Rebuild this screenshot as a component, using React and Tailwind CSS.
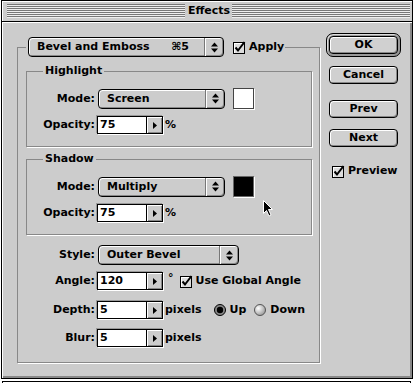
import React from 'react';

function UpDown() {
    return (
        <svg width="7" height="11" viewBox="0 0 7 11">
            <path d="M0 4.5L3.5 0.5L7 4.5Z" fill="#000" />
            <path d="M0 6.5L3.5 10.5L7 6.5Z" fill="#000" />
        </svg>
    );
}

function Popup({ label, hotkey, className }) {
    return (
        <div className={`flex h-[20px] shrink-0 rounded-[4px] border border-black bg-[#cccccc] shadow-[inset_1px_1px_0_#fff,inset_-1px_-1px_0_#888] ${className}`}>
            <div className="flex flex-1 items-center pl-[8px] pr-[15px]">
                <span>{label}</span>
                {hotkey && <span className="ml-auto">{hotkey}</span>}
            </div>
            <div className="flex w-[19px] items-center justify-center border-l border-[#777] shadow-[inset_1px_0_0_#fff]">
                <UpDown />
            </div>
        </div>
    );
}

function Field({ value, className }) {
    return (
        <div className={`flex h-[18px] w-[66px] shrink-0 border border-black bg-white shadow-[1px_1px_0_#fff,-1px_-1px_0_#999] ${className}`}>
            <div className="flex-1 pl-[2px] leading-[16px]">{value}</div>
            <div className="flex w-[16px] items-center justify-center border-l border-black bg-[#cccccc] shadow-[inset_1px_1px_0_#fff,inset_-1px_-1px_0_#888]">
                <svg width="4" height="7" viewBox="0 0 4 7">
                    <path d="M0 0L4 3.5L0 7Z" fill="#000" />
                </svg>
            </div>
        </div>
    );
}

function Check({ className }) {
    return (
        <svg className={`shrink-0 ${className}`} width="13" height="13" viewBox="0 0 13 13">
            <rect x="0.5" y="1.5" width="11" height="11" fill="#dddddd" stroke="#000" />
            <path d="M1 2.5H11M1.5 2.5V12" stroke="#fff" />
            <path d="M2.5 6.5L5 9.5L11.5 1" stroke="#000" strokeWidth="2" fill="none" />
        </svg>
    );
}

function Radio({ on, className }) {
    return (
        <svg className={`shrink-0 ${className}`} width="12" height="12" viewBox="0 0 12 12">
            <defs>
                <radialGradient id={on ? 'rOn' : 'rOff'} cx="0.35" cy="0.35" r="0.7">
                    <stop offset="0" stopColor="#ffffff" />
                    <stop offset="1" stopColor={on ? '#777777' : '#999999'} />
                </radialGradient>
            </defs>
            <circle cx="6" cy="6" r="5.5" fill={on ? '#888' : `url(#rOff)`} stroke={on ? '#000' : '#555'} />
            {on && <circle cx="6" cy="6" r="3.2" fill="#000" />}
        </svg>
    );
}

function Button({ children, className }) {
    return (
        <div className={`flex h-[18px] w-[69px] shrink-0 items-center justify-center rounded-[4px] border border-black bg-[#d0d0d0] shadow-[inset_1px_1px_0_#fff,inset_-1px_-1px_0_#888] ${className}`}>
            {children}
        </div>
    );
}

export default function App() {
    return (
        <div className="h-[383px] w-[415px] overflow-hidden bg-white font-['DejaVu_Sans',sans-serif] text-[11px] font-bold leading-[14px] text-black">
            <div className="relative ml-[1px] flex h-[379px] w-[412px] flex-col border border-black">
                {/* title bar */}
                <div className="flex h-[21px] shrink-0 border-b border-black bg-[#cccccc] pl-[5px] pr-[2px] pt-[3px] shadow-[inset_1px_1px_0_#fff]">
                    <div className="flex h-[14px] flex-1 items-center justify-center bg-[repeating-linear-gradient(to_bottom,#777_0px,#777_1px,#eeeeee_1px,#eeeeee_2px)]">
                        <span className="bg-[#cccccc] pl-[3px] pr-[2px] leading-[14px]">Effects</span>
                    </div>
                </div>

                <div className="flex flex-1 border-l border-t border-white bg-[#cccccc] shadow-[inset_-2px_-2px_0_#888]">
                    <fieldset className="ml-[14px] mt-[14px] h-[326px] w-[303px] shrink-0 border border-[#888888] pl-[8px] pr-[7px] shadow-[1px_1px_0_#fff]">
                        <legend className="flex items-center pl-[2px] pr-[1px]">
                            <Popup className="w-[196px]" label="Bevel and Emboss" hotkey="⌘5" />
                            <Check className="ml-[9px]" />
                            <span className="ml-[3px]">Apply</span>
                        </legend>

                        <fieldset className="mt-[7px] h-[83px] w-[286px] border border-[#888888] pl-[16px] shadow-[1px_1px_0_#fff]">
                            <legend className="px-[2px]">Highlight</legend>
                            <div className="mt-[10px] flex h-[21px] items-center">
                                <div className="w-[52px] text-right">Mode:</div>
                                <Popup className="ml-[3px] w-[127px]" label="Screen" />
                                <div className="ml-[8px] h-[21px] w-[21px] border border-[#444] bg-white shadow-[1px_1px_0_#fff]" />
                            </div>
                            <div className="mt-[7px] flex h-[18px] items-center">
                                <div className="w-[52px] text-right">Opacity:</div>
                                <Field className="ml-[2px]" value="75" />
                                <span className="ml-[2px]">%</span>
                            </div>
                        </fieldset>

                        <fieldset className="mt-[5px] h-[83px] w-[286px] border border-[#888888] pl-[16px] shadow-[1px_1px_0_#fff]">
                            <legend className="px-[2px]">Shadow</legend>
                            <div className="mt-[10px] flex h-[21px] items-center">
                                <div className="w-[52px] text-right">Mode:</div>
                                <Popup className="ml-[3px] w-[127px]" label="Multiply" />
                                <div className="ml-[8px] h-[21px] w-[21px] border border-[#666] bg-black shadow-[1px_1px_0_#fff]" />
                            </div>
                            <div className="mt-[7px] flex h-[18px] items-center">
                                <div className="w-[52px] text-right">Opacity:</div>
                                <Field className="ml-[2px]" value="75" />
                                <span className="ml-[2px]">%</span>
                            </div>
                        </fieldset>

                        <div className="mt-[10px] flex h-[20px] items-center">
                            <div className="w-[69px] text-right">Style:</div>
                            <Popup className="ml-[3px] w-[141px]" label="Outer Bevel" />
                        </div>
                        <div className="mt-[6px] flex h-[20px] items-center">
                            <div className="w-[69px] text-right">Angle:</div>
                            <Field className="ml-[2px]" value="120" />
                            <span className="ml-[5px] self-start">°</span>
                            <Check className="ml-[6px]" />
                            <span className="ml-[3px]">Use Global Angle</span>
                        </div>
                        <div className="mt-[9px] flex h-[20px] items-center">
                            <div className="w-[69px] text-right">Depth:</div>
                            <Field className="ml-[2px]" value="5" />
                            <span className="ml-[2px]">pixels</span>
                            <Radio on className="ml-[12px]" />
                            <span className="ml-[4px]">Up</span>
                            <Radio className="ml-[8px]" />
                            <span className="ml-[4px]">Down</span>
                        </div>
                        <div className="mt-[8px] flex h-[20px] items-center">
                            <div className="w-[69px] text-right">Blur:</div>
                            <Field className="ml-[2px]" value="5" />
                            <span className="ml-[2px]">pixels</span>
                        </div>
                    </fieldset>

                    <div className="flex flex-col items-start">
                        <div className="ml-[6px] mt-[10px] rounded-[7px] border border-black bg-[#999999] p-[2px] shadow-[inset_1px_1px_0_#ddd]">
                            <Button>OK</Button>
                        </div>
                        <Button className="ml-[9px] mt-[9px]">Cancel</Button>
                        <Button className="ml-[9px] mt-[16px]">Prev</Button>
                        <Button className="ml-[9px] mt-[11px]">Next</Button>
                        <div className="ml-[12px] mt-[17px] flex h-[14px] items-center">
                            <Check />
                            <span className="ml-[3px]">Preview</span>
                        </div>
                    </div>
                </div>

                {/* mouse pointer */}
                <svg className="absolute left-[261px] top-[199px]" width="11" height="17" viewBox="0 0 11 17">
                    <path d="M0.5 0.5V13.5L3.5 10.5L6 16L8 15L5.5 9.5H9.5Z" fill="#000" stroke="#fff" strokeWidth="1" />
                </svg>
            </div>
            <div className="ml-[2px] mt-[2px] h-[2px] w-[409px] border-l border-r border-t border-black" />
        </div>
    );
}
